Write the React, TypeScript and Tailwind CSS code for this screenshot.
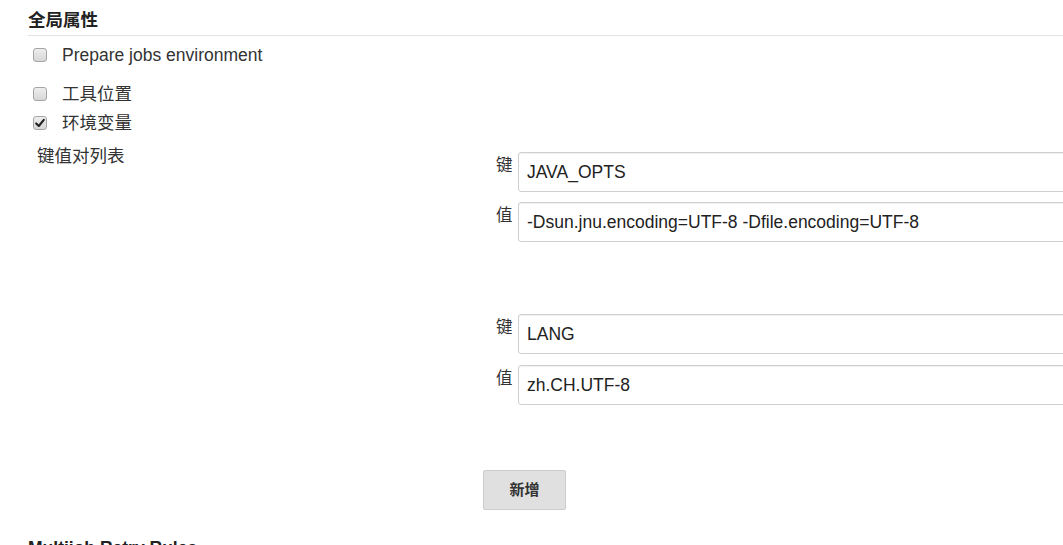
import React from "react";

const FONT = '"Liberation Sans", Arial, "Noto Sans CJK SC", sans-serif';

function Box({ checked }: { checked?: boolean }) {
  return (
    <span className="relative inline-block w-[14px] h-[14px] rounded-[3px] border border-[#a6a6a6] bg-gradient-to-b from-[#eeeeee] to-[#d6d6d6] shrink-0">
      {checked && (
        <svg viewBox="0 0 14 14" className="absolute left-[-1px] top-[-1px] w-[14px] h-[14px]">
          <path d="M3.2 7.4 L5.8 10 L10.8 3.8" fill="none" stroke="#222" strokeWidth="2.1" strokeLinecap="round" strokeLinejoin="round" />
        </svg>
      )}
    </span>
  );
}

function Row({ label, value }: { label: string; value: string }) {
  return (
    <div className="flex h-[40px]">
      <div className="w-[35px] shrink-0 pl-[13px] pt-[2px] text-[16.5px] leading-[22px] text-[#333]">{label}</div>
      <div className="w-[620px] h-[40px] border border-[#cfcfcf] rounded-[3px] bg-white shadow-[inset_0_1px_1px_rgba(0,0,0,0.06)] pl-[8px] flex items-center text-[17.5px] text-[#222]">
        {value}
      </div>
    </div>
  );
}

export default function App() {
  return (
    <div className="w-[1063px] h-[545px] overflow-hidden bg-white text-[#333]" style={{ fontFamily: FONT }}>
      <div className="pl-[28px]">
        <div className="pt-[9px] pb-[4px] border-b border-[#e2e2e2] text-[17.5px] leading-[22px] font-bold text-[#222]">全局属性</div>
        <div className="mt-[8px] h-[22px] flex items-center pl-[5px] gap-[15px] text-[17.5px]">
          <Box />
          <span>Prepare jobs environment</span>
        </div>
        <div className="mt-[17px] h-[22px] flex items-center pl-[5px] gap-[15px] text-[17.5px]">
          <Box />
          <span>工具位置</span>
        </div>
        <div className="mt-[7px] h-[22px] flex items-center pl-[5px] gap-[15px] text-[17.5px]">
          <Box checked />
          <span>环境变量</span>
        </div>
        <div className="mt-[11px] flex">
          <div className="w-[455px] shrink-0 pl-[9px] text-[17.5px] leading-[22px]">键值对列表</div>
          <div className="pt-[7px] flex flex-col">
            <div className="flex flex-col gap-[10px]">
              <Row label="键" value="JAVA_OPTS" />
              <Row label="值" value="-Dsun.jnu.encoding=UTF-8 -Dfile.encoding=UTF-8" />
            </div>
            <div className="mt-[72px] flex flex-col gap-[11px]">
              <Row label="键" value="LANG" />
              <Row label="值" value="zh.CH.UTF-8" />
            </div>
            <div className="mt-[65px]">
              <button className="w-[83px] h-[40px] bg-[#e0e0e0] border border-[#cccccc] rounded-[2px] text-[15px] font-bold text-[#333]">新增</button>
            </div>
          </div>
        </div>
        <div className="mt-[27px] text-[17.5px] leading-[22px] font-bold text-[#222]">Multijob Retry Rules</div>
      </div>
    </div>
  );
}
